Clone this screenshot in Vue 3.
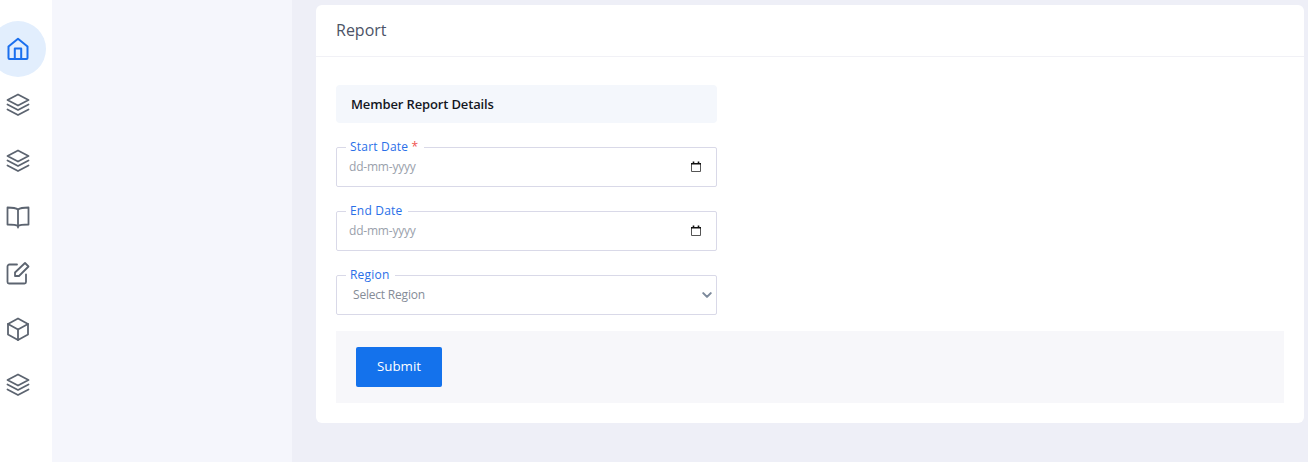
<script setup>
const navItems = [
  { name: 'home', active: true },
  { name: 'layers' },
  { name: 'layers' },
  { name: 'book' },
  { name: 'edit' },
  { name: 'box' },
  { name: 'layers' }
]
</script>

<template>
  <div class="page">
    <nav class="rail">
      <a v-for="(item, i) in navItems" :key="i" class="rail__item" :class="{ 'rail__item--active': item.active }">
        <svg class="rail__icon" viewBox="0 0 24 24" fill="none" stroke="currentColor" stroke-width="1.800" stroke-linejoin="round" stroke-linecap="round">
          <template v-if="item.name === 'home'">
            <path d="M12 1.800 L21.500 9.500 V21 a1 1 0 0 1 -1 1 H3.500 a1 1 0 0 1 -1 -1 V9.500 Z" stroke-width="2" />
            <path d="M8.800 22 V11.500 H15.200 V22" stroke-width="2" />
          </template>
          <template v-else-if="item.name === 'layers'">
            <path d="M12 1.500 L22.500 7 L12 12.500 L1.500 7 Z" />
            <path d="M1.500 11.500 L12 17 L22.500 11.500" />
            <path d="M1.500 16.500 L12 22 L22.500 16.500" />
          </template>
          <template v-else-if="item.name === 'book'">
            <path d="M12 4.500 C10 3 8 2.500 1.500 2.500 V19.500 C8 19.500 10 19.500 12 21 C14 19.500 16 19.500 22.500 19.500 V2.500 C16 2.500 14 3 12 4.500 Z" />
            <path d="M12 4.500 V22.500" />
          </template>
          <template v-else-if="item.name === 'edit'">
            <path d="M11 3.500 H3.500 a2 2 0 0 0 -2 2 V21 a1.500 1.500 0 0 0 1.500 1.500 H18.500 a1.500 1.500 0 0 0 1.500 -1.500 V13.500" />
            <path d="M19 2 L22.500 5.500 L13 15 H9 V11.500 Z" />
          </template>
          <template v-else>
            <path d="M12 1.500 L22 7 V17.500 L12 23 L2 17.500 V7 Z" />
            <path d="M2 7 L12 12.500 L22 7" />
            <path d="M12 12.500 V23" />
          </template>
        </svg>
      </a>
    </nav>

    <aside class="subnav"></aside>

    <main class="main">
      <section class="card">
        <header class="card__head">Report</header>
        <form class="card__body" @submit.prevent>
          <div class="form-col">
            <h3 class="section-title">Member Report Details</h3>

            <fieldset class="field">
              <legend>Start Date <span class="req">*</span></legend>
              <input class="field__input" type="text" placeholder="dd-mm-yyyy" />
              <svg class="field__cal" viewBox="0 0 12 12" fill="none">
                <path d="M1.500 2.500 H10.500 V10.500 H1.500 Z" stroke="#555" stroke-width="1" stroke-linejoin="round" />
                <path d="M1 2.700 H11 M3.500 .5 V2 M8.500 .5 V2" stroke="#111" stroke-width="1.600" />
              </svg>
            </fieldset>

            <fieldset class="field">
              <legend>End Date</legend>
              <input class="field__input" type="text" placeholder="dd-mm-yyyy" />
              <svg class="field__cal" viewBox="0 0 12 12" fill="none">
                <path d="M1.500 2.500 H10.500 V10.500 H1.500 Z" stroke="#555" stroke-width="1" stroke-linejoin="round" />
                <path d="M1 2.700 H11 M3.500 .5 V2 M8.500 .5 V2" stroke="#111" stroke-width="1.600" />
              </svg>
            </fieldset>

            <fieldset class="field">
              <legend>Region</legend>
              <select class="field__select">
                <option>Select Region</option>
              </select>
              <svg class="field__chev" viewBox="0 0 16 16" fill="none" stroke="#7d8a9c" stroke-width="2.800" stroke-linecap="round" stroke-linejoin="round">
                <path d="M3 5.500 L8 10.500 L13 5.500" />
              </svg>
            </fieldset>
          </div>

          <div class="actions">
            <button class="btn" type="submit">Submit</button>
          </div>
        </form>
      </section>
    </main>
  </div>
</template>

<style>
html, body { margin: 0; background: #eeeff7; }
</style>

<style scoped>
.page {
  display: flex;
  height: 462px;
  overflow: hidden;
  font-family: "Open Sans", "Noto Sans", sans-serif;
}

.rail {
  width: 52px;
  flex: none;
  background: #fff;
  padding-top: 21px;
  display: flex;
  flex-direction: column;
  box-sizing: border-box;
}
.rail__item {
  width: 56px;
  height: 56px;
  margin-left: -10px;
  flex: none;
  display: flex;
  align-items: center;
  justify-content: center;
  color: #5c6470;
  border-radius: 50%;
  position: relative;
  z-index: 1;
}
.rail__item--active { background: #e2eefd; color: #1a6fee; }
.rail__icon { width: 24px; height: 24px; }

.subnav {
  width: 240px;
  flex: none;
  background: #f5f6fc;
}

.main {
  flex: 1;
  padding: 5px 4px 0 24px;
  min-width: 0;
}

.card {
  background: #fff;
  border-radius: 6px;
  height: 418px;
}
.card__head {
  height: 52px;
  box-sizing: border-box;
  padding: 0 20px 2px;
  display: flex;
  align-items: center;
  font-size: 16px;
  color: #4c5366;
  border-bottom: 1px solid #f1f1f6;
}
.card__body { padding: 28px 20px 20px; }

.form-col { width: 381px; }

.section-title {
  margin: 0 0 16px;
  height: 38px;
  line-height: 38px;
  padding-left: 15px;
  background: #f4f7fc;
  border-radius: 4px;
  font-size: 13px;
  font-weight: 600;
  letter-spacing: -.14px;
  color: #14171f;
}

.field {
  position: relative;
  margin: 0 0 16px;
  padding: 0;
  height: 48px;
  box-sizing: border-box;
  border: 1px solid #d9d9e8;
  border-radius: 2px;
  min-width: 0;
}
.field legend {
  margin-left: 9px;
  padding: 0 6px 2px 4px;
  font-size: 12px;
  line-height: 15px;
  font-weight: 500;
  letter-spacing: .2px;
  color: #2a6fe8;
}
.req { color: #f0524f; }

.field__input,
.field__select {
  display: block;
  width: 100%;
  height: 20px;
  border: 0;
  outline: 0;
  background: transparent;
  box-sizing: border-box;
  font-family: inherit;
  font-size: 12px;
  letter-spacing: -.2px;
  color: #858c97;
}
.field__input { padding: 0 12px; }
.field__input::placeholder { color: #9aa1ab; opacity: 1; }
.field__select {
  appearance: none;
  padding: 0 16px;
}

.field__cal {
  position: absolute;
  right: 14px;
  top: 5px;
  width: 12px;
  height: 12px;
}
.field__chev {
  position: absolute;
  right: 3px;
  top: 5px;
  width: 12px;
  height: 12px;
}

.actions {
  background: #f7f7fa;
  padding: 16px 20px;
  height: 72px;
  box-sizing: border-box;
}
.btn {
  width: 86px;
  height: 40px;
  border: 0;
  border-radius: 2px;
  padding: 0 0 2px;
  background: #1472ec;
  color: #fff;
  font-family: inherit;
  font-size: 13.300px;
  font-weight: 500;
}
</style>
